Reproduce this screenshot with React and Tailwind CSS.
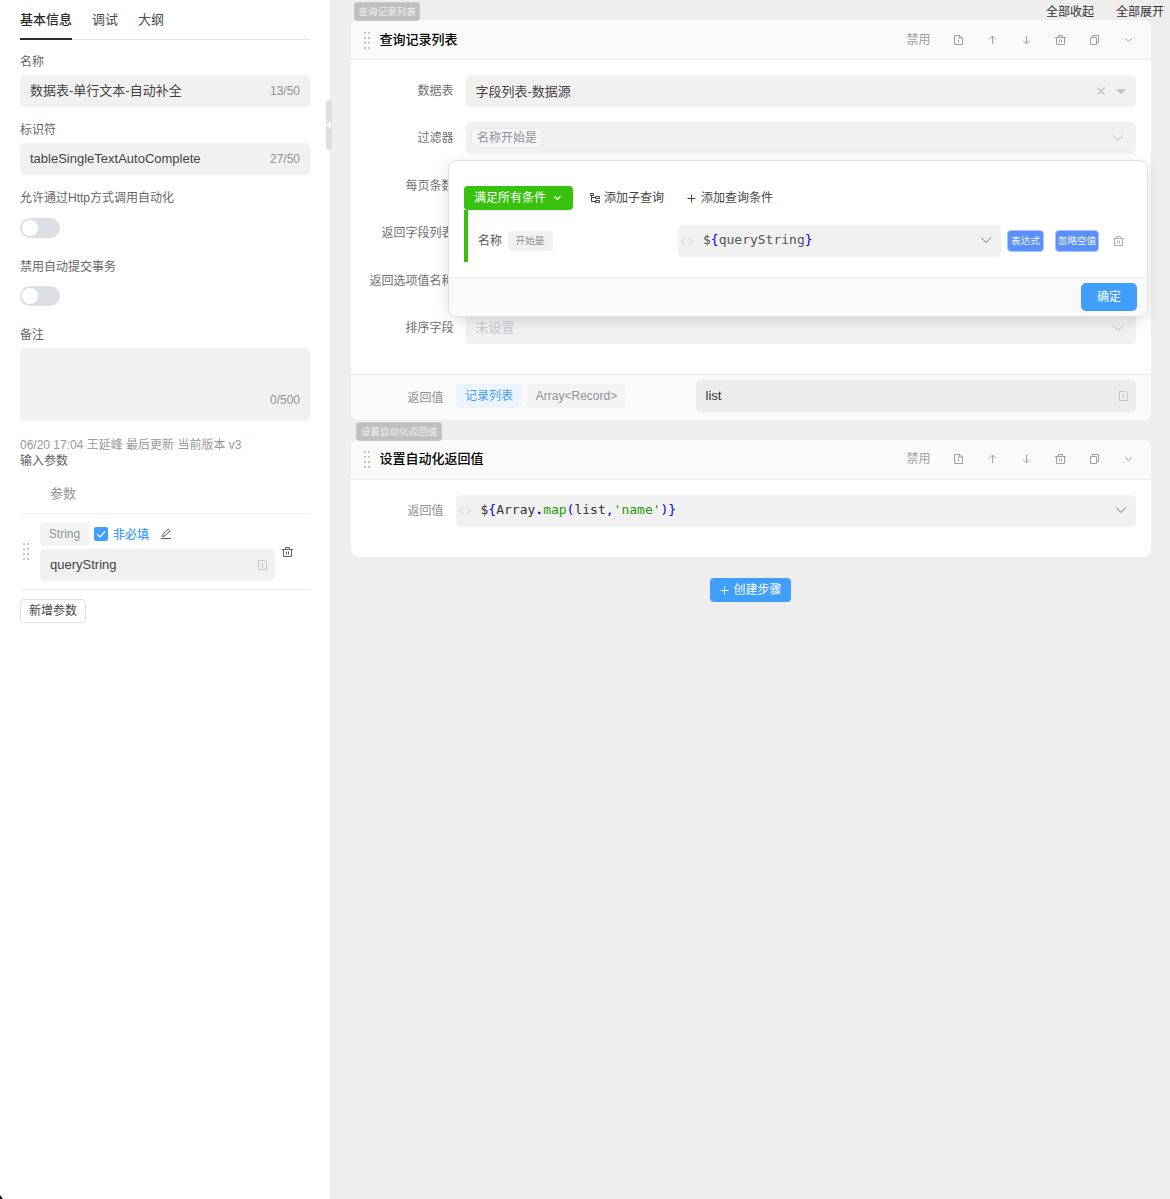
import React, { useState } from 'react';

const Svg = ({ size = 12, className = '', children, strokeWidth = 1 }) => (
  <svg
    width={size}
    height={size}
    viewBox="0 0 12 12"
    fill="none"
    stroke="currentColor"
    strokeWidth={strokeWidth}
    className={`shrink-0 ${className}`}
  >
    {children}
  </svg>
);

const DocIcon = (props) => (
  <Svg {...props}>
    <path d="M2.5 1.5h5.5l2.5 2.5v6.5h-8z M7.5 1.5v2.5h3 M6.5 4v1 M6.5 6v2.5" />
  </Svg>
);

const VarIcon = (props) => (
  <Svg {...props}>
    <path d="M1.5 1.5h6l2 2v7h-8z M4.5 4.5h1v4" />
  </Svg>
);

const UpIcon = (props) => (
  <Svg {...props}>
    <path d="M6.5 2v8 M3 5.5l3.5-3.5l3.5 3.5" />
  </Svg>
);

const DownIcon = (props) => (
  <Svg {...props}>
    <path d="M6.5 2v8 M3 6.5l3.5 3.5l3.5-3.5" />
  </Svg>
);

const TrashIcon = (props) => (
  <Svg {...props}>
    <path d="M1 3.5h11 M4.5 3.5v-2h4v2 M2.5 3.5v7h8v-7 M5.5 5.5v3 M7.5 5.5v3" />
  </Svg>
);

const CopyIcon = (props) => (
  <Svg {...props}>
    <path d="M2.5 3.5h6v7h-6z M4.5 3.5v-2h6v7h-2" />
  </Svg>
);

const SmallChevron = (props) => (
  <Svg {...props}>
    <path d="M3.5 4.5l3 2.8l3-2.8" />
  </Svg>
);

const WideChevron = (props) => (
  <Svg {...props}>
    <path d="M1 3.5l5 5l5-5" />
  </Svg>
);

const PlusIcon = (props) => (
  <Svg {...props}>
    <path d="M6.5 2.5v8 M2.5 6.5h8" />
  </Svg>
);

const CodeIcon = (props) => (
  <Svg {...props}>
    <path d="M4 3l-3.2 3l3.2 3 M8 3l3.2 3l-3.2 3" />
  </Svg>
);

const DragHandle = () => (
  <div className="grid grid-cols-2 gap-x-[2px] gap-y-[3px] w-[6px] shrink-0">
    {[0, 1, 2, 3, 4, 5, 6, 7].map((i) => (
      <span key={i} className="w-[2px] h-[2px] bg-[#c6c6c6]" />
    ))}
  </div>
);

const SideLabel = ({ children }) => (
  <div className="h-7 leading-[30px] text-xs text-[#666]">{children}</div>
);

const Switch = () => (
  <div className="w-10 h-5 rounded-full bg-[#dcdfe6] p-[2px]">
    <div className="w-4 h-4 rounded-full bg-white" />
  </div>
);

const StepBadge = ({ children, className }) => (
  <span
    className={`relative z-10 h-[19px] leading-[18px] rounded-[3px] bg-[#bfbfbf] border border-[#c8c8c8] text-center text-[9.6px] text-white/75 whitespace-nowrap ${className}`}
  >
    {children}
  </span>
);

const StepHeader = ({ title, className }) => {
  const icons = [DocIcon, UpIcon, DownIcon, TrashIcon, CopyIcon, SmallChevron];
  return (
    <div className={`h-10 flex items-center bg-[#fafafa] border-b border-[#ebebeb] pl-[13px] pr-[6px] rounded-t-lg ${className}`}>
      <DragHandle />
      <h3 className="ml-[9.5px] text-[13px] font-medium text-black">{title}</h3>
      <div className="ml-auto flex items-center text-[#a0a0a0]">
        <span className="text-xs mr-[10.5px]">禁用</span>
        {icons.map((Icon, i) => (
          <span key={i} className="w-[34px] flex justify-center">
            <Icon />
          </span>
        ))}
      </div>
    </div>
  );
};

const FormRow = ({ label, children }) => (
  <div className="flex items-center h-8 mb-[15.4px]">
    <div className="w-[102.5px] text-right text-xs text-[#707070] whitespace-nowrap">{label}</div>
    <div className="ml-[12.5px] flex-1 h-8 rounded-[5px] bg-[#f1f1f1] flex items-center">{children}</div>
  </div>
);

const Sidebar = () => {
  const tabs = ['基本信息', '调试', '大纲'];
  const [active, setActive] = useState('基本信息');
  return (
    <aside className="relative w-[330px] shrink-0 bg-white px-5">
      <nav className="flex gap-5 h-10 border-b border-[#e4e4e4] text-[13px]">
        {tabs.map((tab) => (
          <button
            key={tab}
            onClick={() => setActive(tab)}
            className={
              tab === active
                ? 'h-10 pt-[2px] border-b-2 border-[#2b2b2b] text-[#2b2b2b] font-medium'
                : 'h-10 pt-[2px] border-b-2 border-transparent text-[#4a4a4a]'
            }
          >
            {tab}
          </button>
        ))}
      </nav>

      <div className="pt-[7px]">
        <SideLabel>名称</SideLabel>
        <div className="h-8 mb-2 px-[10px] rounded-[5px] bg-[#f1f1f1] flex items-center justify-between">
          <span className="text-[13px] text-[#444]">数据表-单行文本-自动补全</span>
          <span className="text-xs text-[#909399]">13/50</span>
        </div>
        <SideLabel>标识符</SideLabel>
        <div className="h-8 mb-2 px-[10px] rounded-[5px] bg-[#f1f1f1] flex items-center justify-between">
          <span className="text-[13px] text-[#444]">tableSingleTextAutoComplete</span>
          <span className="text-xs text-[#909399]">27/50</span>
        </div>
        <SideLabel>允许通过Http方式调用自动化</SideLabel>
        <div className="h-[33px] pt-[7px] mb-2">
          <Switch />
        </div>
        <SideLabel>禁用自动提交事务</SideLabel>
        <div className="h-8 pt-[6px] mb-2">
          <Switch />
        </div>
        <SideLabel>备注</SideLabel>
        <div className="h-[73px] rounded-[5px] bg-[#f1f1f1] px-[10px] pb-[13px] flex items-end justify-end">
          <span className="text-xs text-[#909399]">0/500</span>
        </div>
      </div>

      <div className="mt-4 text-xs leading-4">
        <p className="text-[#999]">06/20 17:04 王延峰 最后更新 当前版本 v3</p>
        <p className="text-[#606060]">输入参数</p>
      </div>

      <div className="h-[45px] pl-[30px] pt-[13px] leading-[23px] text-[13px] text-[#909399] border-b border-[#ebeef5]">
        参数
      </div>
      <div className="h-[76px] flex items-center border-b border-[#ebeef5] pl-[3px]">
        <DragHandle />
        <div className="ml-[11px] w-[235px]">
          <div className="flex items-center h-6 mb-[3px]">
            <span className="h-6 leading-6 w-[49px] text-center rounded bg-[#f4f4f5] text-xs text-[#909399]">String</span>
            <span className="ml-[5px] w-[14px] h-[14px] rounded-[2px] bg-[#409eff] text-white flex items-center justify-center">
              <Svg strokeWidth={1.2}>
                <path d="M2 6l3 3l5-5.5" />
              </Svg>
            </span>
            <span className="ml-[5px] pt-px text-xs font-medium text-[#409eff]">非必填</span>
            <Svg className="ml-[11px] text-[#555]">
              <path d="M2.5 8.5l.6-2.4l5.2-5l1.8 1.8l-5.2 5z M1 10.5h10" />
            </Svg>
          </div>
          <div className="h-8 pl-[10px] pr-[6px] rounded-[5px] bg-[#f1f1f1] flex items-center justify-between">
            <span className="text-[13px] text-[#444]">queryString</span>
            <VarIcon className="text-[#c0c4cc]" />
          </div>
        </div>
        <TrashIcon className="ml-[6px] text-[#606266]" />
      </div>
      <button className="mt-[9px] w-[66px] h-6 rounded border border-[#dcdfe6] text-xs leading-[23px] text-[#444] block">
        新增参数
      </button>

      <div className="absolute left-[326px] top-[100px] w-[6px] h-[50px] rounded-[3px] bg-[#dedede] z-20 flex items-center">
        <svg width="5" height="8" viewBox="0 0 5 8" fill="#fff">
          <path d="M5 0v8L0 4z" />
        </svg>
      </div>
      <svg className="absolute left-0 bottom-0" width="3" height="4" viewBox="0 0 3 4">
        <path d="M0 0L3 4H0z" fill="#111" />
      </svg>
    </aside>
  );
};

const FilterPopover = () => (
  <div className="absolute z-30 left-[97px] top-[140px] w-[700px] h-[157px] rounded-lg border border-[#e2e2e2] bg-white shadow-[0_4px_16px_rgba(0,0,0,0.12)] overflow-hidden flex flex-col">
    <div className="flex-1 pl-[15px] pt-[25px]">
      <div className="flex items-center h-6 text-xs text-[#444]">
        <button className="w-[109px] h-6 pl-[10px] rounded bg-[#38c20f] text-white flex items-center">
          满足所有条件
          <SmallChevron className="ml-[5px]" strokeWidth={1.3} />
        </button>
        <Svg className="ml-4">
          <path d="M1.5 1.5h3v2h-3z M2.5 3.5v6h4 M2.5 5.5h4 M6.5 4.5h4v2h-4z M6.5 8.5h4v2h-4z" />
        </Svg>
        <span className="ml-[3px]">添加子查询</span>
        <PlusIcon className="ml-[21px]" />
        <span className="ml-1">添加查询条件</span>
      </div>
      <div className="flex items-center h-[52px] pt-[10px] border-l-4 border-[#38c20f] pl-[10px]">
        <span className="text-xs text-[#555] w-6">名称</span>
        <span className="ml-[5.5px] w-[45px] h-5 leading-5 rounded bg-[#f1f1f1] text-center text-[9.6px] text-[#909090]">
          开始是
        </span>
        <div className="ml-[125.5px] w-[323px] h-8 rounded-[5px] bg-[#f1f1f1] flex items-center pl-[3px] pr-[9px]">
          <CodeIcon className="text-[#c8c8c8]" />
          <span className="ml-[10px] pb-[2px] font-['DejaVu_Sans_Mono',monospace] text-[13px] text-[#555]">
            $<span className="text-[#0000e6]">{'{'}</span>queryString<span className="text-[#0000e6]">{'}'}</span>
          </span>
          <WideChevron className="ml-auto mb-[2px] text-[#777]" />
        </div>
        <span className="ml-[6px] w-[37px] h-[22px] leading-5 rounded border border-[#a9c4ff] bg-[#5b8ff9] text-center text-[9.6px] text-white/90">
          表达式
        </span>
        <span className="ml-[11px] w-11 h-[22px] leading-5 rounded border border-[#a9c4ff] bg-[#5b8ff9] text-center text-[9.6px] text-white/90 whitespace-nowrap">
          忽略空值
        </span>
        <TrashIcon className="ml-[13px] text-[#b0b0b0]" />
      </div>
    </div>
    <div className="h-[39px] border-t border-[#ebebeb] bg-[#fafafa] flex justify-end pt-[5px] pr-[10px]">
      <button className="w-14 h-7 rounded-[5px] bg-[#409eff] text-xs text-white">确定</button>
    </div>
  </div>
);

const QueryStep = () => (
  <section className="relative w-[800px] h-[400px] rounded-lg bg-white flex flex-col">
    <StepHeader title="查询记录列表" className="pt-px" />
    <div className="flex-1 pt-[15px] pr-[15px]">
      <FormRow label="数据表">
        <span className="ml-[9.5px] pt-px text-[13px] text-[#444]">字段列表-数据源</span>
        <Svg className="ml-auto text-[#c4c4c4]" strokeWidth={1.6}>
          <path d="M2.5 2.5l7 7 M9.5 2.5l-7 7" />
        </Svg>
        <svg className="ml-[9px] mr-[10px]" width="10" height="5" viewBox="0 0 10 5">
          <path d="M0 0h10L6 4.6Q5 5.4 4 4.6z" fill="#c4c4c4" />
        </svg>
      </FormRow>
      <FormRow label="过滤器">
        <span className="ml-[5px] h-5 leading-[18px] px-[5px] rounded border border-[#e9e9eb] bg-[#f4f4f5] text-xs text-[#909399]">
          名称开始是
        </span>
        <WideChevron className="ml-auto mr-3 text-[#b8b8b8]" />
      </FormRow>
      <FormRow label="每页条数" />
      <FormRow label="返回字段列表" />
      <FormRow label="返回选项值名称" />
      <FormRow label="排序字段">
        <span className="ml-[9.5px] text-[13px] text-[#c8cbd2]">未设置</span>
        <WideChevron className="ml-auto mr-3 text-[#b8b8b8]" />
      </FormRow>
    </div>
    <div className="h-[46px] border-t border-[#ebebeb] bg-[#fafafa] rounded-b-lg flex pt-[5px] pr-[15px] text-xs">
      <div className="w-[92.5px] leading-[36px] text-right text-[#909090]">返回值</div>
      <span className="ml-[12.5px] mt-1 w-[66px] h-6 leading-6 text-center rounded bg-[#ecf5ff] text-[#409eff]">记录列表</span>
      <span className="ml-[5px] mt-1 w-[99px] h-6 leading-6 text-center rounded bg-[#f4f4f5] text-[#909399]">
        Array&lt;Record&gt;
      </span>
      <div className="ml-auto w-[440px] h-8 rounded-[5px] bg-[#ececec] flex items-center justify-between pl-[9.5px] pr-[6px]">
        <span className="text-[13px] text-[#333]">list</span>
        <VarIcon className="text-[#c0c4cc]" />
      </div>
    </div>
    <FilterPopover />
  </section>
);

const ReturnStep = () => (
  <section className="w-[800px] h-[117px] rounded-lg bg-white">
    <StepHeader title="设置自动化返回值" className="pb-px" />
    <div className="flex pt-[15px] pr-[15px]">
      <div className="w-[92.5px] text-right text-xs leading-8 text-[#909090]">返回值</div>
      <div className="ml-[12.5px] flex-1 h-8 rounded-[5px] bg-[#f1f1f1] flex items-center pl-[3px] pr-[9px]">
        <CodeIcon className="text-[#c8c8c8]" />
        <span className="ml-[9.5px] pb-[2px] font-['DejaVu_Sans_Mono',monospace] text-[13px] text-[#333]">
          $<span className="text-[#0000e6]">{'{'}</span>Array<span className="text-[#0000e6] font-bold">.</span>
          <span className="text-[#1f9a00]">map</span>
          <span className="text-[#0000e6]">(</span>list<span className="text-[#0000e6]">,</span>
          <span className="text-[#1f9a00]">'name'</span>
          <span className="text-[#0000e6]">{')}'}</span>
        </span>
        <WideChevron className="ml-auto mb-[2px] text-[#777]" />
      </div>
    </div>
  </section>
);

export default function App() {
  return (
    <div className="flex w-[1170px] h-[1199px] overflow-hidden bg-[#eee] font-['Liberation_Sans','Noto_Sans_CJK_SC',sans-serif]">
      <Sidebar />
      <main className="flex-1 pl-[21px]">
        <div className="h-5 flex items-start pr-[6px] pt-[2px]">
          <StepBadge className="ml-[3px] w-[66px]">查询记录列表</StepBadge>
          <div className="ml-auto flex gap-[22px] text-xs leading-5 text-[#333]">
            <span>全部收起</span>
            <span>全部展开</span>
          </div>
        </div>
        <QueryStep />
        <div className="h-5 flex items-start pt-[2px]">
          <StepBadge className="ml-[5px] w-[86px]">设置自动化返回值</StepBadge>
        </div>
        <ReturnStep />
        <div className="w-[798px] mt-[21px] flex justify-center">
          <button className="w-[81px] h-6 rounded bg-[#409eff] text-xs text-white flex items-center justify-center gap-[3px]">
            <PlusIcon />
            创建步骤
          </button>
        </div>
      </main>
    </div>
  );
}
